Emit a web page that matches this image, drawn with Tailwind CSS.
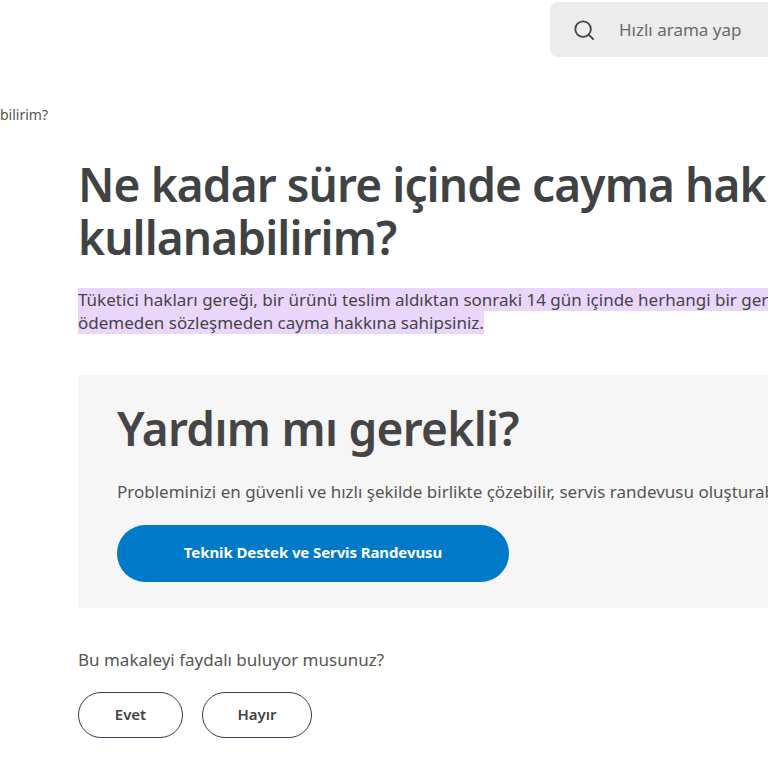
<!DOCTYPE html>
<html lang="tr">
<head>
    <meta charset="UTF-8">
    <meta name="viewport" content="width=device-width, initial-scale=1.0">
    <title>Cayma hakkı</title>
    <script src="https://cdn.jsdelivr.net/npm/@tailwindcss/browser@4"></script>
</head>
<body class="bg-white overflow-hidden h-[768px] font-['Noto_Sans',sans-serif] text-[#454545]">

    <!-- header -->
    <div class="flex justify-end pt-[2px]">
        <div class="w-[218px] h-[55px] bg-[#ececec] rounded-l-lg flex items-center pl-[23px] gap-[24px]">
            <svg class="w-[22px] h-[22px] text-[#444]" viewBox="0 0 24 24" fill="none" stroke="currentColor" stroke-width="2">
                <circle cx="11" cy="11" r="8.5"></circle>
                <path d="M17 17l5 5" stroke-linecap="round"></path>
            </svg>
            <span class="text-[17px] text-[#6a6a6a] whitespace-nowrap">Hızlı arama yap</span>
        </div>
    </div>

    <!-- breadcrumb, cut off at the left edge -->
    <div class="w-[48px] mt-[48px] flex justify-end overflow-hidden">
        <span class="text-[14px] leading-[20px] whitespace-nowrap text-[#555]">Ne kadar süre içinde cayma hakkımı kullanabilirim?</span>
    </div>

    <div class="pl-[78px] w-[1200px]">
        <h1 class="mt-[33px] text-[46px] leading-[53px] tracking-[-0.9px] font-semibold text-[#3f4344]">Ne kadar süre içinde cayma hakkımı<br>kullanabilirim?</h1>

        <p class="mt-[24px] text-[17px] leading-[23px] text-[#454545]">
            <span class="bg-[#ead6fb]">Tüketici hakları gereği, bir ürünü teslim aldıktan sonraki 14 gün içinde herhangi bir gerekçe göstermeden ve cezai şart<br>ödemeden sözleşmeden cayma hakkına sahipsiniz.</span>
        </p>

        <div class="mt-[41px] h-[233px] bg-[#f6f6f6] pl-[39px] pt-[23px]">
            <h2 class="text-[46px] leading-[60px] tracking-[-0.7px] font-semibold text-[#454545]">Yardım mı gerekli?</h2>
            <p class="mt-[22px] text-[17px] leading-[24px] text-[#555] whitespace-nowrap">Probleminizi en güvenli ve hızlı şekilde birlikte çözebilir, servis randevusu oluşturabilirsiniz.</p>
            <a class="mt-[21px] flex items-center justify-center w-[392px] h-[57px] pb-[2px] rounded-full bg-[#0079c8] text-white text-[15px] tracking-[-0.1px] font-bold">Teknik Destek ve Servis Randevusu</a>
        </div>

        <p class="mt-[40px] text-[17px] leading-[24px] text-[#555]">Bu makaleyi faydalı buluyor musunuz?</p>
        <div class="mt-[20px] flex gap-[19px]">
            <button class="w-[105px] h-[46px] pb-[1px] rounded-full border border-[#2c3e50] text-[15px] font-semibold text-[#3f4344]">Evet</button>
            <button class="w-[110px] h-[46px] pb-[1px] rounded-full border border-[#2c3e50] text-[15px] font-semibold text-[#3f4344]">Hayır</button>
        </div>
    </div>

</body>
</html>
